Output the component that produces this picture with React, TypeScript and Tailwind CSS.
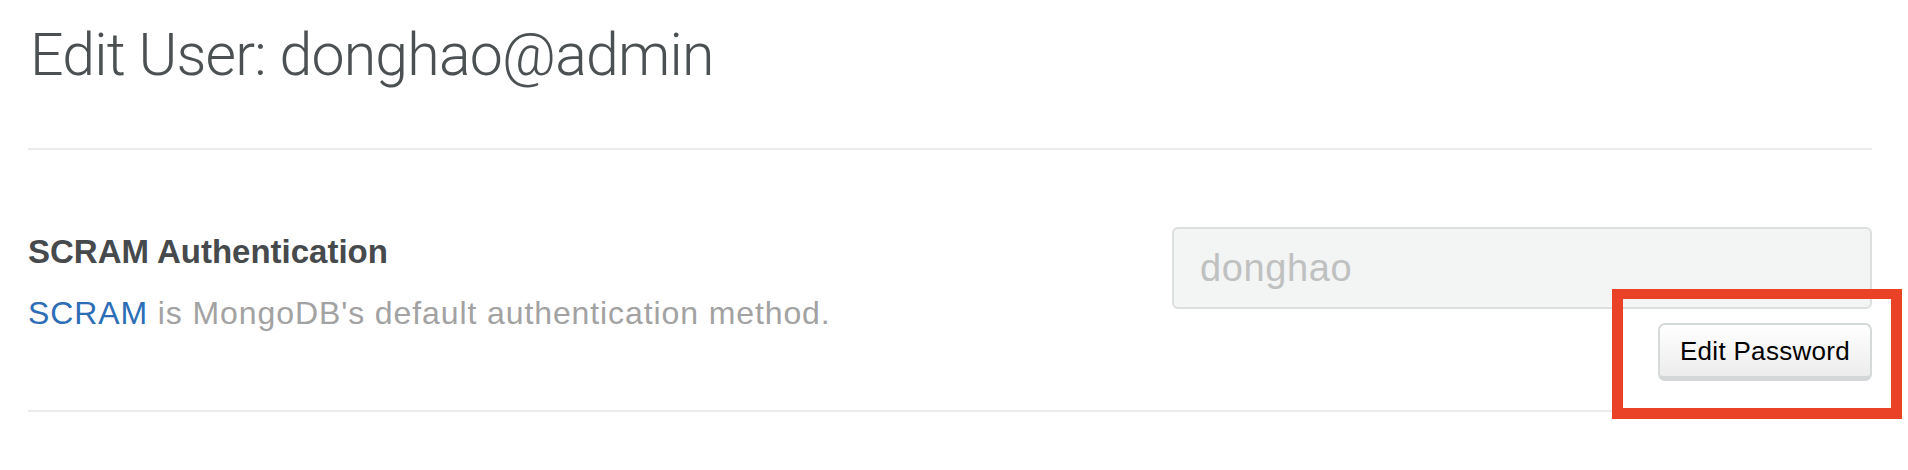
import type { FC } from "react";

const UsernameField: FC<{ value: string }> = (props) => {
  return (
    <div className="flex h-[82px] w-[700px] items-center rounded-[6px] border-2 border-[#dcdfdf] bg-[#f3f4f4] pl-[26px]">
      <span className="text-[38px] leading-[38px] tracking-[0.6px] text-[#bfc1c1]">{props.value}</span>
    </div>
  );
};

const EditPasswordButton: FC = () => {
  return (
    <button
      type="button"
      className="flex h-[58px] w-[214px] items-center justify-center rounded-[7px] border-2 border-b-[5px] border-[#d6d9d9] border-b-[#d3d7d7] bg-gradient-to-b from-white to-[#ececec] text-[26px] leading-[26px] tracking-[0.3px] text-black"
    >
      Edit Password
    </button>
  );
};

export default function App() {
  return (
    <div className="relative h-[470px] w-full overflow-hidden bg-white pl-[28px] pr-[36px] font-['Liberation_Sans',Arial,sans-serif]">
      <h1 className="pt-[25px] pl-[2px] font-['Roboto','Liberation_Sans',sans-serif] text-[59px] font-light leading-[59px] tracking-[-0.8px] text-[#4b5052]">
        Edit User: donghao@admin
      </h1>

      <div className="mt-[64px] h-[2px] bg-[#ebebeb]" />

      <section className="flex items-start justify-between border-b-2 border-[#ebebeb] pt-[77px] pb-[29px]">
        <div className="mt-[9px] flex flex-col">
          <h2 className="text-[33px] font-bold leading-[32px] text-[#464a4c]">SCRAM Authentication</h2>
          <p className="mt-[29px] text-[32px] leading-[32px] tracking-[0.9px] text-[#a2a2a2]">
            <a href="#" className="text-[#2c6db6]">
              SCRAM
            </a>{" "}
            is MongoDB's default authentication method.
          </p>
        </div>

        <div className="flex flex-col items-end gap-[14px]">
          <UsernameField value="donghao" />
          <EditPasswordButton />
        </div>
      </section>

      {/* annotation box from the screenshot */}
      <div className="pointer-events-none absolute left-[1612px] top-[289px] h-[130px] w-[290px] border-[11px] border-t-[10px] border-[#ea4226]" />
    </div>
  );
}
